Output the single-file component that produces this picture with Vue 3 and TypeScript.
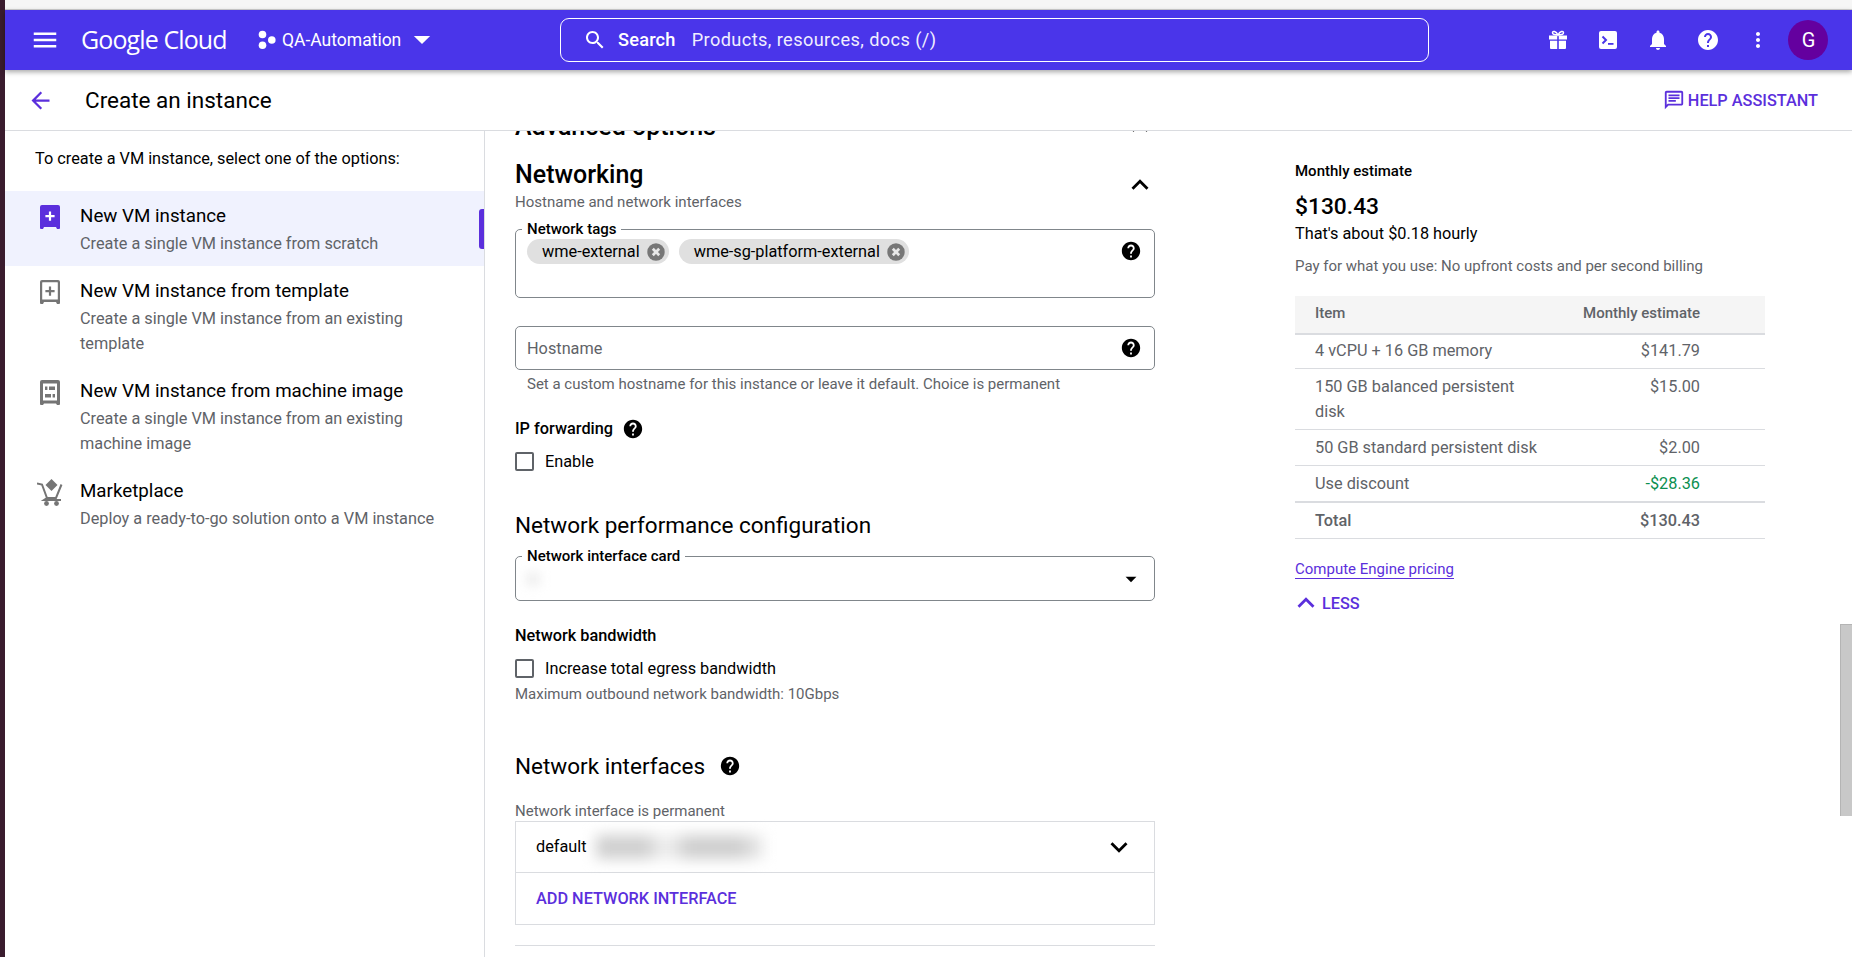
<script setup lang="ts">
interface SideItem {
  title: string
  desc: string
  icon: 'new' | 'template' | 'image' | 'market'
  active?: boolean
}

const sideItems: SideItem[] = [
  { title: 'New VM instance', desc: 'Create a single VM instance from scratch', icon: 'new', active: true },
  { title: 'New VM instance from template', desc: 'Create a single VM instance from an existing template', icon: 'template' },
  { title: 'New VM instance from machine image', desc: 'Create a single VM instance from an existing machine image', icon: 'image' },
  { title: 'Marketplace', desc: 'Deploy a ready-to-go solution onto a VM instance', icon: 'market' }
]

const tags = ['wme-external', 'wme-sg-platform-external']

const estimates = [
  { item: '4 vCPU + 16 GB memory', price: '$141.79' },
  { item: '150 GB balanced persistent disk', price: '$15.00' },
  { item: '50 GB standard persistent disk', price: '$2.00' },
  { item: 'Use discount', price: '-$28.36', discount: true }
]

const helpPath = 'M12 2C6.48 2 2 6.48 2 12s4.48 10 10 10 10-4.48 10-10S17.52 2 12 2zm1 17h-2v-2h2v2zm2.07-7.75l-.9.92C13.45 12.9 13 13.5 13 15h-2v-.5c0-1.1.45-2.1 1.17-2.83l1.24-1.26c.37-.36.59-.86.59-1.41 0-1.1-.9-2-2-2s-2 .9-2 2H8c0-2.21 1.79-4 4-4s4 1.79 4 4c0 .88-.36 1.68-.93 2.25z'
const chevronUp = 'M12 8l-6 6 1.41 1.41L12 10.83l4.59 4.58L18 14z'
const boxPath = 'M2 0h16a2 2 0 0 1 2 2v21a1 1 0 0 1-1 1h-2l-1-2H4l-1 2H1a1 1 0 0 1-1-1V2a2 2 0 0 1 2-2z'
</script>

<template>
  <div class="screen">
    <div class="dock"></div>
    <div class="window">
      <div class="top-strip"></div>

      <header class="topbar">
        <svg class="ic menu" viewBox="0 0 24 24" width="30" height="30"><path d="M3 18h18v-2H3v2zm0-5h18v-2H3v2zm0-7v2h18V6H3z" /></svg>
        <div class="logo"><span class="logo-g">Google</span> <span class="logo-c">Cloud</span></div>
        <div class="project">
          <svg class="ic" viewBox="0 0 20 20" width="20" height="20">
            <circle cx="5.5" cy="4.5" r="3.8" />
            <circle cx="5.5" cy="15.2" r="3.8" />
            <circle cx="14.8" cy="10" r="3.8" />
          </svg>
          <span class="project-name">QA-Automation</span>
          <svg class="ic" viewBox="0 0 24 24" width="28" height="28"><path d="M5 9l7 7 7-7z" transform="translate(0 -.5)" /></svg>
        </div>
        <div class="search">
          <svg class="ic" viewBox="0 0 24 24" width="24" height="24"><path d="M15.5 14h-.79l-.28-.27C15.41 12.59 16 11.11 16 9.5 16 5.91 13.09 3 9.5 3S3 5.91 3 9.5 5.91 16 9.5 16c1.61 0 3.09-.59 4.23-1.57l.27.28v.79l5 4.99L20.49 19l-4.99-5zm-6 0C7.01 14 5 11.99 5 9.5S7.01 5 9.5 5 14 7.01 14 9.5 11.99 14 9.5 14z" /></svg>
          <span class="search-label">Search</span>
          <span class="search-hint">Products, resources, docs (/)</span>
        </div>
        <div class="top-actions">
          <svg class="ic" viewBox="0 0 24 24" width="24" height="24">
            <path d="M3 7.5h8.2v4H3zM12.8 7.5H21v4h-8.2zM4 12.8h7.2V21H5a1 1 0 0 1-1-1zM12.8 12.8H20V20a1 1 0 0 1-1 1h-6.2z" />
            <path d="M12 7C10 3 6.5 2.6 6.5 4.8 6.5 6.5 9.5 7 12 7c2.5 0 5.5-.5 5.5-2.2C17.5 2.6 14 3 12 7z" fill="none" stroke="#fff" stroke-width="1.5" />
          </svg>
          <svg class="ic" viewBox="0 0 24 24" width="24" height="24">
            <rect x="3" y="3" width="18" height="18" rx="2" />
            <path d="M6.5 8.5L10 12l-3.5 3.5" fill="none" stroke="#4a35ea" stroke-width="2" />
            <path d="M12 15h5.5v1.8H12z" fill="#4a35ea" />
          </svg>
          <svg class="ic" viewBox="0 0 24 24" width="24" height="24"><path d="M12 22c1.1 0 2-.9 2-2h-4c0 1.1.89 2 2 2zm6-6v-5c0-3.07-1.64-5.64-4.5-6.32V4c0-.83-.67-1.5-1.5-1.5s-1.5.67-1.5 1.5v.68C7.63 5.36 6 7.92 6 11v5l-2 2v1h16v-1l-2-2z" /></svg>
          <svg class="ic" viewBox="0 0 24 24" width="24" height="24"><path :d="helpPath" /></svg>
          <svg class="ic" viewBox="0 0 24 24" width="24" height="24"><path d="M12 8c1.1 0 2-.9 2-2s-.9-2-2-2-2 .9-2 2 .9 2 2 2zm0 2c-1.1 0-2 .9-2 2s.9 2 2 2 2-.9 2-2-.9-2-2-2zm0 6c-1.1 0-2 .9-2 2s.9 2 2 2 2-.9 2-2-.9-2-2-2z" /></svg>
          <div class="avatar">G</div>
        </div>
      </header>

      <div class="subbar">
        <svg class="purple back" viewBox="0 0 24 24" width="27" height="27"><path d="M20 11H7.83l5.59-5.59L12 4l-8 8 8 8 1.41-1.41L7.83 13H20v-2z" /></svg>
        <h1 class="page-title">Create an instance</h1>
        <div class="help-assistant">
          <svg class="purple" viewBox="0 0 24 24" width="22" height="22"><path d="M20 2H4c-1.1 0-2 .9-2 2v18l4-4h14c1.1 0 2-.9 2-2V4c0-1.1-.9-2-2-2zm0 14H5.17L4 17.17V4h16v12zM6 12h8v2H6zm0-3h12v2H6zm0-3h12v2H6z" /></svg>
          <span>HELP ASSISTANT</span>
        </div>
      </div>

      <div class="body">
        <aside class="sidebar">
          <p class="side-intro">To create a VM instance, select one of the options:</p>
          <div v-for="it in sideItems" :key="it.title" class="side-item" :class="{ active: it.active }">
            <div class="side-icon">
              <svg v-if="it.icon === 'new'" viewBox="0 0 20 24" width="20" height="24">
                <path :d="boxPath" fill="#5b2fdc" />
                <path d="M8.9 6.5h2.2V10h3.5v2.2h-3.5v3.5H8.9v-3.5H5.4V10h3.5z" fill="#fff" />
              </svg>
              <svg v-else-if="it.icon === 'template'" viewBox="0 0 20 24" width="20" height="24">
                <path :d="boxPath" fill="#757575" />
                <rect x="2.2" y="2.2" width="15.6" height="17.3" rx="0.5" fill="#fff" />
                <path d="M8.9 6.5h2.2V10h3.5v2.2h-3.5v3.5H8.9v-3.5H5.4V10h3.5z" fill="#757575" />
              </svg>
              <svg v-else-if="it.icon === 'image'" viewBox="0 0 20 25" width="20" height="25">
                <path d="M2 0h16a2 2 0 0 1 2 2v22a1 1 0 0 1-1 1h-2l-1-1.5H4L3 25H1a1 1 0 0 1-1-1V2a2 2 0 0 1 2-2z" fill="#757575" />
                <rect x="3" y="3.5" width="14" height="17" fill="#fff" />
                <path d="M5 6.6h2.4V10H5zM9 6.6h6V10H9zM5 14h6v3.6H5zM12.6 14H15v3.6h-2.4z" fill="#757575" />
              </svg>
              <svg v-else class="cart" viewBox="0 0 26 28" width="26" height="28">
                <path d="M14.5 1l6 6-6 6-6-6z" fill="#757575" />
                <path d="M0 5.5l5 1 5 13.5h9l5.5-13.500M10 20l-3 2h17" fill="none" stroke="#757575" stroke-width="2" />
                <circle cx="9.5" cy="25.5" r="2.4" fill="#757575" />
                <circle cx="19.5" cy="25.5" r="2.4" fill="#757575" />
              </svg>
            </div>
            <div class="side-text">
              <div class="side-title">{{ it.title }}</div>
              <div class="side-desc">{{ it.desc }}</div>
            </div>
            <span v-if="it.active" class="side-marker"></span>
          </div>
        </aside>

        <main class="main">
          <section class="form-col">
            <div class="section-head adv">
              <div class="adv-title">Advanced options</div>
              <svg class="head-chevron" viewBox="0 0 24 24" width="34" height="34"><path :d="chevronUp" /></svg>
            </div>

            <div class="section-head net">
              <div>
                <h2 class="net-title">Networking</h2>
                <div class="net-sub">Hostname and network interfaces</div>
              </div>
              <svg class="head-chevron net-chevron" viewBox="0 0 24 24" width="34" height="34"><path :d="chevronUp" /></svg>
            </div>

            <div class="field tags-field">
              <label class="legend">Network tags</label>
              <div class="chips">
                <span v-for="t in tags" :key="t" class="chip">
                  {{ t }}
                  <svg viewBox="0 0 24 24" width="22" height="22">
                    <circle cx="12" cy="12" r="9.5" fill="#777" />
                    <path d="M8.5 8.5l7 7m0-7l-7 7" stroke="#e8e8e8" stroke-width="3" />
                  </svg>
                </span>
              </div>
              <svg class="help" viewBox="0 0 24 24" width="22" height="22"><path :d="helpPath" /></svg>
            </div>

            <div class="field host-field">
              <span class="placeholder">Hostname</span>
              <svg class="help" viewBox="0 0 24 24" width="22" height="22"><path :d="helpPath" /></svg>
            </div>
            <div class="hint hint-indent">Set a custom hostname for this instance or leave it default. Choice is permanent</div>

            <div class="label-row ip-row">
              <span class="strong">IP forwarding</span>
              <svg viewBox="0 0 24 24" width="22" height="22"><path :d="helpPath" /></svg>
            </div>
            <div class="check-row">
              <span class="box"></span>
              <span>Enable</span>
            </div>

            <h3 class="sub-title perf-title">Network performance configuration</h3>
            <div class="field nic-field">
              <label class="legend">Network interface card</label>
              <span class="smudge smudge-small"></span>
              <svg class="help" viewBox="0 0 24 24" width="26" height="26"><path d="M7 10l5 5 5-5z" /></svg>
            </div>

            <div class="strong band-title">Network bandwidth</div>
            <div class="check-row">
              <span class="box"></span>
              <span>Increase total egress bandwidth</span>
            </div>
            <div class="hint band-hint">Maximum outbound network bandwidth: 10Gbps</div>

            <div class="label-row if-row">
              <h3 class="sub-title">Network interfaces</h3>
              <svg viewBox="0 0 24 24" width="22" height="22"><path :d="helpPath" /></svg>
            </div>
            <div class="hint if-hint">Network interface is permanent</div>
            <div class="if-box">
              <div class="if-row-item">
                <span class="if-name">default</span>
                <span class="smudge smudge-wide"></span>
                <svg class="if-chevron" viewBox="0 0 24 24" width="34" height="34"><path d="M16.59 8.59L12 13.17 7.41 8.59 6 10l6 6 6-6z" /></svg>
              </div>
              <div class="if-add">ADD NETWORK INTERFACE</div>
            </div>
            <div class="end-rule"></div>
          </section>

          <section class="cost-col">
            <div class="cost-label">Monthly estimate</div>
            <div class="cost-total">$130.43</div>
            <div class="cost-hourly">That's about $0.18 hourly</div>
            <div class="hint cost-note">Pay for what you use: No upfront costs and per second billing</div>

            <div class="est-table">
              <div class="est-head">
                <span>Item</span>
                <span>Monthly estimate</span>
              </div>
              <div v-for="(e, i) in estimates" :key="e.item" class="est-row" :class="{ last: i === estimates.length - 1 }">
                <span class="est-item">{{ e.item }}</span>
                <span :class="{ discount: e.discount }">{{ e.price }}</span>
              </div>
              <div class="est-row est-total">
                <span>Total</span>
                <span>$130.43</span>
              </div>
            </div>

            <a class="pricing-link">Compute Engine pricing</a>
            <div class="less">
              <svg class="purple" viewBox="0 0 24 24" width="34" height="34"><path :d="chevronUp" /></svg>
              <span>LESS</span>
            </div>
          </section>

          <div class="scroll-thumb"></div>
        </main>
      </div>
    </div>
  </div>
</template>

<style>
html, body {
  margin: 0;
  overflow: hidden;
}
</style>

<style scoped>
.screen {
  display: flex;
  width: 1852px;
  height: 957px;
  overflow: hidden;
  font-family: Roboto, "Liberation Sans", sans-serif;
  font-size: 16.3px;
  color: #000;
  background: #fff;
}
.dock {
  width: 5px;
  flex: none;
  background: #3a1c2e;
}
.window {
  flex: 1;
  min-width: 0;
  display: flex;
  flex-direction: column;
}
.top-strip {
  height: 9px;
  flex: none;
  background: #f6f6f6;
  border-bottom: 1px solid #d0d0d0;
}
.topbar {
  height: 60px;
  flex: none;
  display: flex;
  align-items: center;
  background: #4a35ea;
  color: #fff;
  position: relative;
  z-index: 2;
  box-shadow: 0 2px 5px rgba(0, 0, 0, 0.35);
}
.ic {
  fill: #fff;
  flex: none;
}
.purple {
  fill: #5b2fdc;
  flex: none;
}
.menu {
  margin-left: 25px;
}
.logo {
  margin-left: 21px;
  width: 152px;
  font-family: "Open Sans", sans-serif;
  font-size: 25px;
  letter-spacing: -0.9px;
  white-space: nowrap;
  line-height: 28px;
  margin-top: -2px;
}
.logo-g {
  font-weight: 500;
}
.logo-c {
  font-weight: 400;
}
.project {
  display: flex;
  align-items: center;
  margin-left: 24px;
  width: 303px;
  flex: none;
}
.project-name {
  margin-left: 5px;
  font-size: 17.5px;
  margin-right: 7px;
}
.search {
  width: 869px;
  height: 44px;
  flex: none;
  box-sizing: border-box;
  border: 1px solid #fff;
  border-radius: 9px;
  display: flex;
  align-items: center;
  padding-left: 22px;
}
.search-label {
  margin-left: 11px;
  margin-bottom: 2px;
  font-weight: 500;
  font-size: 18.2px;
  letter-spacing: 0.2px;
}
.search-hint {
  margin-left: 16px;
  margin-bottom: 2px;
  font-size: 18.2px;
  letter-spacing: 0.4px;
  color: #f0eeff;
}
.top-actions {
  display: flex;
  align-items: center;
  gap: 25.9px;
  margin-left: 117px;
}
.avatar {
  width: 40px;
  height: 40px;
  border-radius: 50%;
  background: #64009f;
  text-align: center;
  line-height: 40px;
  font-size: 20px;
  margin-left: -7px;
}
.subbar {
  height: 60px;
  flex: none;
  box-sizing: content-box;
  display: flex;
  align-items: center;
  border-bottom: 1px solid #dadce0;
}
.back {
  margin-left: 22px;
}
.page-title {
  margin: 0 0 0 31px;
  font-size: 22.5px;
  font-weight: 400;
}
.help-assistant {
  margin-left: auto;
  margin-right: 34px;
  display: flex;
  align-items: center;
  gap: 3px;
  color: #5b2fdc;
  font-weight: 500;
  font-size: 16.3px;
}
.body {
  flex: 1;
  min-height: 0;
  display: flex;
  position: relative;
  overflow: hidden;
}
.sidebar {
  width: 480px;
  flex: none;
  box-sizing: border-box;
  border-right: 1px solid #dadce0;
}
.side-intro {
  margin: 18px 0 22px 30px;
  line-height: 20px;
}
.side-item {
  display: flex;
  position: relative;
  padding: 13px 0 11px 0;
  min-height: 52px;
}
.side-item + .side-item {
  padding-bottom: 10px;
}
.side-item.active {
  background: #f0f2fe;
  padding-bottom: 10px;
}
.side-icon {
  width: 75px;
  padding-left: 35px;
  box-sizing: border-box;
  flex: none;
  padding-top: 1px;
}
.cart {
  margin-left: -3px;
  margin-top: -2px;
}
.side-text {
  width: 370px;
}
.side-title {
  font-size: 18.75px;
  line-height: 25px;
}
.side-desc {
  margin-top: 2px;
  color: #5f6368;
  line-height: 25px;
}
.side-marker {
  position: absolute;
  right: 0;
  top: 18px;
  width: 5px;
  height: 40px;
  border-radius: 3px 0 0 3px;
  background: #5b2fdc;
}
.main {
  flex: 1;
  min-width: 0;
  display: flex;
  position: relative;
}
.form-col {
  width: 640px;
  flex: none;
  margin-left: 30px;
  margin-top: -19px;
}
.section-head {
  display: flex;
  justify-content: space-between;
  align-items: center;
}
.head-chevron {
  margin-right: -2px;
}
.net-chevron {
  margin-top: -4px;
}
.adv {
  height: 30px;
}
.adv-title {
  font-size: 25px;
  font-weight: 500;
  line-height: 30px;
}
.net {
  margin-top: 18px;
}
.net-title {
  margin: 0;
  font-size: 25px;
  font-weight: 500;
  line-height: 30px;
}
.net-sub {
  line-height: 24px;
  font-size: 15.05px;
  color: #5f6368;
}
.field {
  position: relative;
  box-sizing: border-box;
  border: 1px solid #80868b;
  border-radius: 5px;
  display: flex;
  justify-content: space-between;
}
.legend {
  position: absolute;
  left: 6px;
  top: -10px;
  padding: 0 5px 0 5px;
  background: #fff;
  font-size: 15px;
  font-weight: 500;
  line-height: 18px;
}
.tags-field {
  margin-top: 15px;
  height: 69px;
  padding: 9px 12px 0 11px;
}
.chips {
  display: flex;
  gap: 10px;
  align-items: flex-start;
}
.chip {
  display: inline-flex;
  align-items: center;
  justify-content: space-between;
  height: 25px;
  padding: 0 2px 0 15px;
  gap: 5px;
  border-radius: 13px;
  background: #e0e0e0;
}
.help {
  flex: none;
}
.tags-field .help {
  margin-top: 1px;
}
.host-field {
  margin-top: 28px;
  height: 44px;
  align-items: center;
  padding: 0 12px 0 11px;
}
.placeholder {
  color: #5f6368;
}
.hint {
  font-size: 15px;
  line-height: 20px;
  color: #5f6368;
}
.hint-indent {
  margin-top: 4px;
  padding-left: 12px;
}
.label-row {
  display: flex;
  align-items: center;
}
.strong {
  font-weight: 500;
  line-height: 24px;
}
.ip-row {
  margin-top: 23px;
  gap: 9px;
}
.check-row {
  margin-top: 8px;
  display: flex;
  align-items: center;
  height: 24px;
  gap: 11px;
}
.box {
  width: 19px;
  height: 19px;
  box-sizing: border-box;
  border: 2px solid #5f6368;
  border-radius: 2px;
}
.sub-title {
  margin: 0;
  font-size: 22.5px;
  font-weight: 400;
  line-height: 30px;
}
.perf-title {
  margin-top: 37px;
}
.nic-field {
  margin-top: 16px;
  height: 45px;
  align-items: center;
  padding: 0 10px 0 11px;
}
.smudge {
  display: block;
  filter: blur(6px);
  background: #d4d4d4;
}
.smudge-small {
  width: 12px;
  height: 12px;
  background: #e8e8e8;
}
.smudge-wide {
  width: 168px;
  height: 24px;
  margin-left: 9px;
  filter: blur(7px);
  background: linear-gradient(90deg, #d0d0d0 0 30%, #ececec 38% 45%, #cfcfcf 55% 85%, #eee);
}
.band-title {
  margin-top: 23px;
}
.band-hint {
  margin-top: 4px;
}
.if-row {
  margin-top: 47px;
  gap: 14px;
}
.if-hint {
  margin-top: 20px;
}
.if-box {
  box-sizing: border-box;
  border: 1px solid #dadce0;
  height: 104px;
}
.if-row-item {
  display: flex;
  align-items: center;
  height: 50px;
  padding: 0 18px 0 20px;
  border-bottom: 1px solid #dadce0;
}
.if-name {
  margin-bottom: 2px;
}
.if-chevron {
  margin-left: auto;
}
.if-add {
  height: 51px;
  line-height: 51px;
  padding-left: 20px;
  font-weight: 500;
  color: #5b2fdc;
}
.end-rule {
  margin-top: 20px;
  height: 1px;
  background: #dadce0;
}
.cost-col {
  width: 470px;
  flex: none;
  margin-left: 140px;
  padding-top: 30px;
}
.cost-label {
  font-size: 15px;
  font-weight: 500;
  line-height: 20px;
}
.cost-total {
  margin-top: 11px;
  font-size: 22.8px;
  font-weight: 500;
  line-height: 30px;
}
.cost-hourly {
  line-height: 24px;
}
.cost-note {
  margin-top: 10px;
}
.est-table {
  margin-top: 20px;
  color: #5f6368;
}
.est-head {
  display: flex;
  justify-content: space-between;
  height: 35px;
  padding: 0 65px 2px 20px;
  box-sizing: content-box;
  line-height: 35px;
  background: #f5f5f5;
  border-bottom: 2px solid #dadce0;
  margin-bottom: -2px;
  font-size: 15px;
  font-weight: 500;
}
.est-row {
  display: flex;
  justify-content: space-between;
  padding: 5px 65px 5px 20px;
  line-height: 25px;
  border-bottom: 1px solid #dadce0;
}
.est-row.last {
  border-bottom-width: 2px;
}
.est-item {
  width: 228px;
}
.discount {
  color: #0b8f50;
}
.est-total {
  font-weight: 500;
}
.pricing-link {
  display: inline-block;
  margin-top: 21px;
  font-size: 15px;
  line-height: 18px;
  color: #5b2fdc;
  border-bottom: 1px solid #5b2fdc;
}
.less {
  margin-top: 12px;
  display: flex;
  align-items: center;
  height: 24px;
  gap: 0;
  margin-left: -6px;
  color: #5b2fdc;
  font-weight: 500;
}
.less span {
  margin-left: -1px;
}
.scroll-thumb {
  position: absolute;
  right: 0;
  top: 493px;
  width: 12px;
  height: 192px;
  box-sizing: border-box;
  background: #c8c8c8;
  border-left: 1px solid #b4b4b4;
  border-top: 1px solid #b4b4b4;
}
</style>
